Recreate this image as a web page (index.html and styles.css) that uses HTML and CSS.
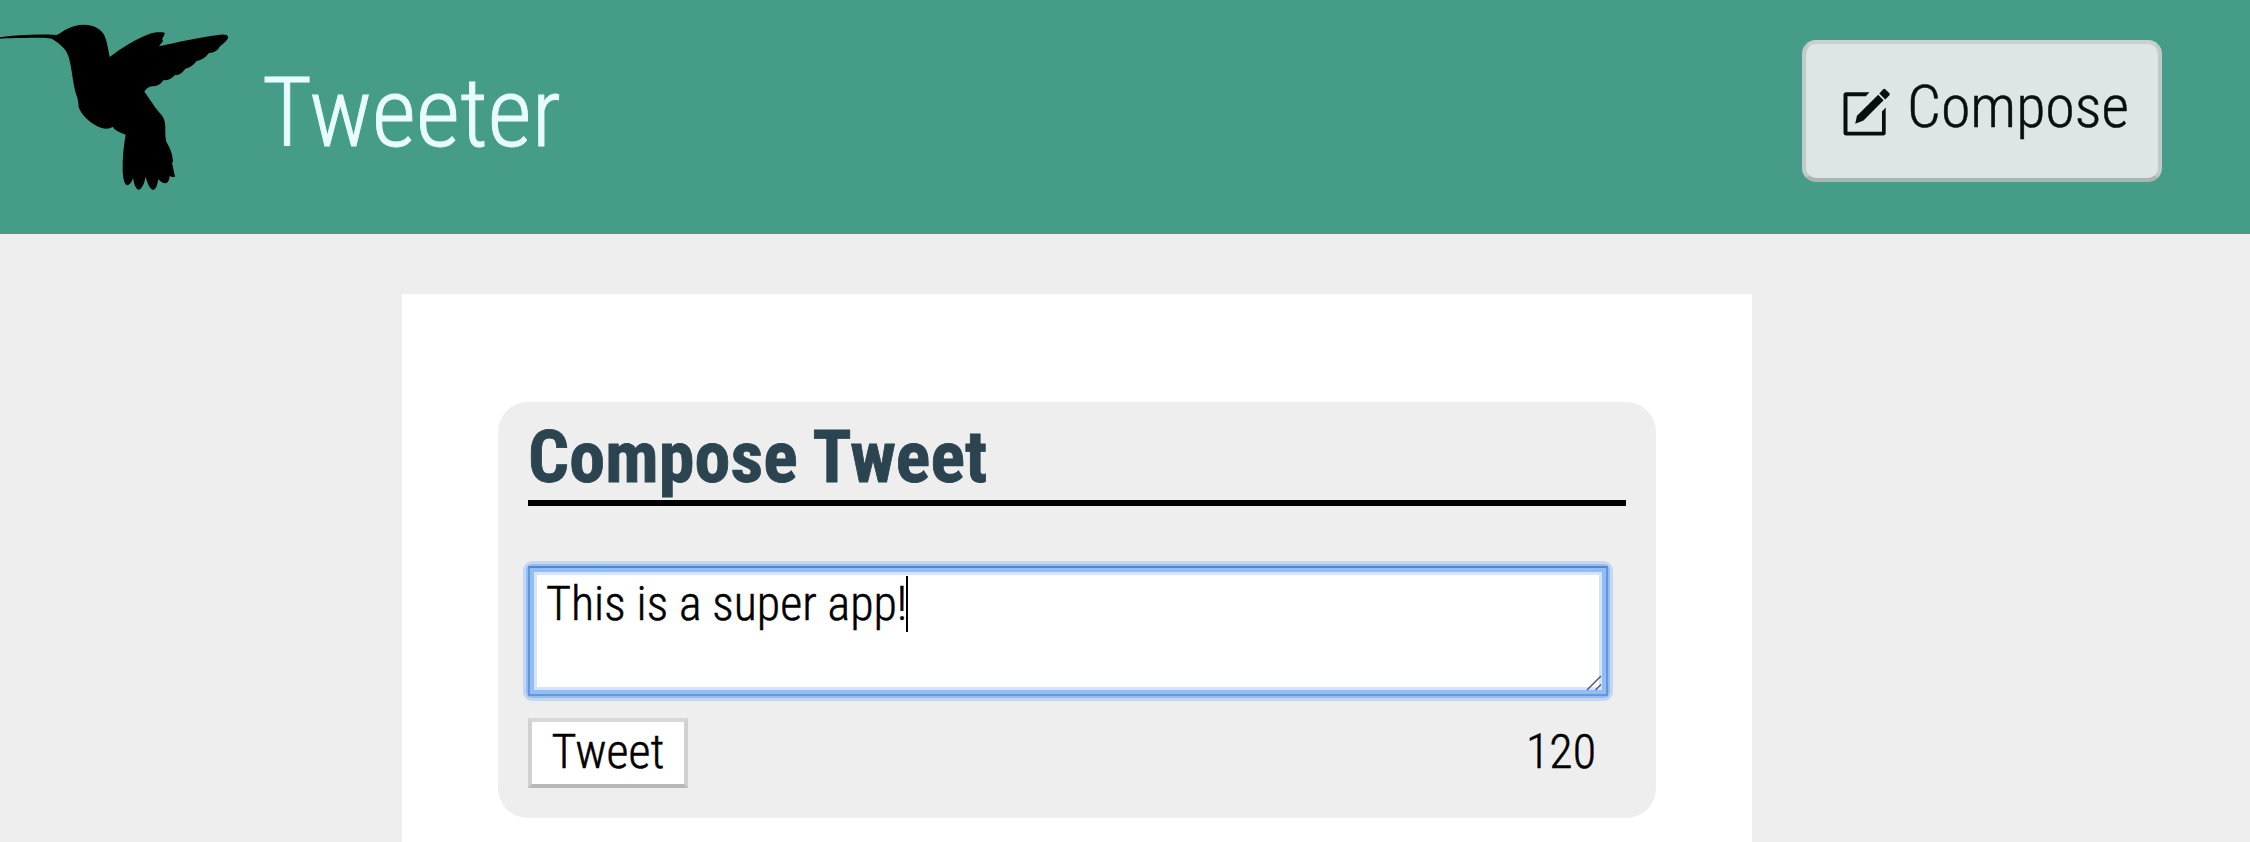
FILE: index.html
```html
<!DOCTYPE html>
<html lang="en">
<head>
<meta charset="utf-8">
<title>Tweeter</title>
<link rel="stylesheet" href="styles.css">
</head>
<body>
<header class="nav">
  <svg class="logo" viewBox="0 0 240 234" width="240" height="234" aria-hidden="true"><g transform="scale(.33333)"><path d="M0 112 C50 105 110 102 170 105 C190 95 210 74 252 74 C285 74 306 90 314 108 C322 128 325 150 329 171 C365 143 405 119 442 104 C462 96 480 96 494 98 Q495 105 489 112 Q484 117 489 124 Q484 130 477 139 C530 126 600 112 660 104 Q687 102 684 114 Q680 124 660 139 Q651 158 626 160 Q612 180 590 183 Q576 202 556 206 Q543 225 524 226 Q512 242 490 241 Q478 260 456 259 Q443 260 433 275 C448 294 462 320 484 344 Q495 356 496 380 Q495 410 499 425 C511 445 517 460 519 485 L516 488 L525 530 Q517 533 509 528 Q507 549 497 550 Q487 551 475 538 Q470 568 460 570 Q446 568 437 530 Q430 567 415 569 Q404 566 399 534 Q392 556 381 556 Q370 552 368 515 Q367 455 377 404 Q344 393 338 380 C325 389 309 387 292 379 C268 367 245 346 236 322 Q235 300 230 288 C218 255 216 200 205 168 C196 143 175 130 158 118 C145 112 100 113 0 116Z"/></g></svg>
  <h1 class="brand">Tweeter</h1>
  <button class="compose" type="button">
    <svg class="edit" viewBox="0 0 48 50" width="48" height="50" aria-hidden="true"><path d="M27.5 4.3H4.2Q1.5 4.3 1.5 7V44.8Q1.5 47.5 4.2 47.5H41Q43.7 47.5 43.7 44.8V19.5L40 23.5V43.7H5.5V8.2H23.8Z"/><path d="M36.2 6.7 41.6 12.2 21.5 32.4 13.2 35.8 15 27.8Z"/><path d="M37.3 5.4 41 1.4Q42.2.2 43.5 1.4L47.2 5.1Q48.2 6.3 47.2 7.5L43.3 11.4Z"/></svg>
    <span>Compose</span>
  </button>
</header>
<main class="container">
  <section class="new-tweet">
    <h2>Compose Tweet</h2>
    <div class="field"><span class="entry">This is a super app!</span><span class="caret"></span>
      <svg class="grip" viewBox="0 0 16 16" width="16" height="16" aria-hidden="true"><path d="M1 15 15 1M9.5 15 15 9.5"/></svg>
    </div>
    <div class="actions"><button class="submit" type="button">Tweet</button><span class="counter">120</span></div>
  </section>
</main>
</body>
</html>
```
FILE: styles.css
```css
* { box-sizing: border-box; }
body {
  margin: 0;
  height: 842px;
  overflow: hidden;
  background: #eee;
  color: #000;
  font-family: "Roboto Condensed", Roboto, sans-serif;
  font-stretch: 75%;
  font-weight: 300;
  -webkit-text-stroke: 0.5px currentColor;
}
h1, h2 { margin: 0; }
button { font: inherit; color: inherit; white-space: nowrap; }
.nav {
  height: 234px;
  padding-right: 88px;
  display: flex;
  align-items: flex-start;
  background: #459d88;
}
.logo { flex: none; }
.brand {
  margin: 57px auto 0 22px;
  font-size: 96px;
  font-weight: 300;
  line-height: 112px;
  color: #e8fbff;
  -webkit-text-stroke-width: 0.9px;
}
.compose {
  width: 360px;
  height: 142px;
  margin-top: 40px;
  padding: 0 0 0 36px;
  display: flex;
  align-items: center;
  gap: 17px;
  border: 4px solid #c4cccb;
  border-color: #c9d1d0 #c1cac8 #abb4b3;
  border-radius: 14px;
  background: #dde6e4;
  color: #07100f;
  font-size: 60px;
  line-height: 70px;
}
.compose span { margin-top: -8px; }
.edit { flex: none; margin-top: 3px; fill: #07100f; }
.container {
  width: 1350px;
  height: 548px;
  margin: 60px 0 0 402px;
  padding: 108px 96px 0;
  background: #fff;
}
.new-tweet {
  isolation: isolate;
  height: 416px;
  padding: 12px 30px 0;
  border-radius: 30px;
  background: #eee;
}
.new-tweet h2 {
  height: 92px;
  padding-top: 1px;
  border-bottom: 6px solid #000;
  font-size: 72px;
  font-weight: 700;
  letter-spacing: 0.15px;
  line-height: 85px;
  color: #2b4450;
  -webkit-text-stroke-width: 0.8px;
}
.field {
  position: relative;
  width: 1080px;
  height: 130px;
  margin-top: 60px;
  padding: 8px 16px;
  display: flex;
  border: 2px solid #6796d5;
  border-top-color: #5985c3;
  box-shadow: inset 0 0 0 4px #91bdf8, inset 0 0 0 7px #d3e4fc;
  background: #fff;
  font-size: 48px;
  line-height: 56px;
}
.field::before {
  content: "";
  position: absolute;
  z-index: -1;
  inset: -4px;
  border-radius: 6px;
  background: #91bdf8;
  box-shadow: 0 0 0 3px #c5d7ee;
}
.caret { width: 2px; height: 56px; margin-left: -1px; background: #000; }
.grip {
  position: absolute;
  right: 4px;
  bottom: 3px;
  fill: none;
  stroke: #555b66;
  stroke-width: 1.5;
}
.actions {
  margin-top: 22px;
  display: flex;
  justify-content: space-between;
  padding-right: 30px;
  font-size: 48px;
  line-height: 56px;
}
.submit {
  width: 160px;
  height: 70px;
  padding: 0 0 2px;
  border: 4px solid #d0d0d0;
  border-color: #d8d8d8 #d0d0d0 #b8b8b8;
  background: #fff;
}
.counter { margin-top: 6px; }
```
